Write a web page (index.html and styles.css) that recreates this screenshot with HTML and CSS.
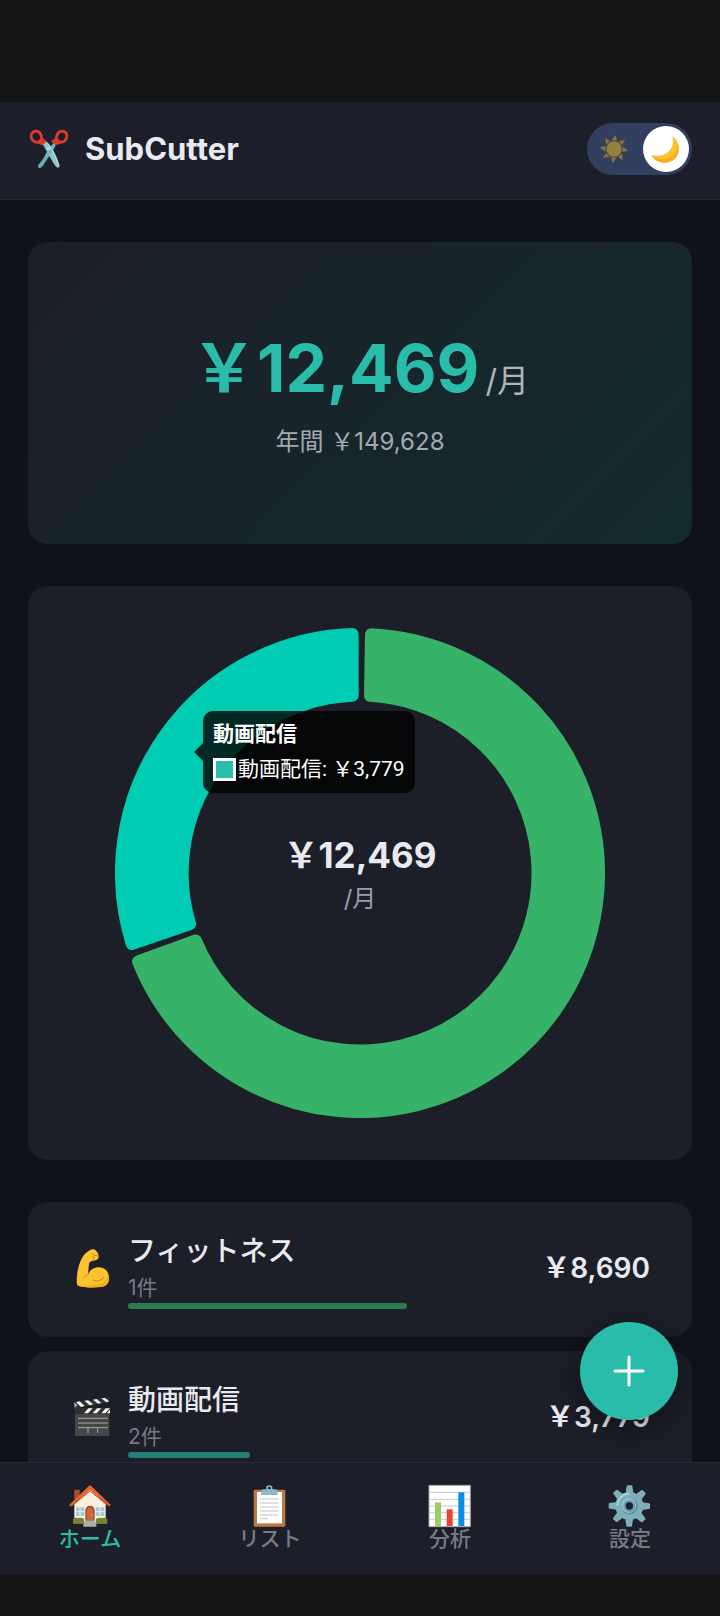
FILE: index.html
```html
<!DOCTYPE html>
<html lang="ja">
<head>
  <meta charset="UTF-8">
  <meta name="viewport" content="width=device-width, initial-scale=1.0">
  <title>SubCutter</title>
  <link rel="stylesheet" href="styles.css">
</head>
<body>
  <div class="app">
    <header class="header">
      <svg class="icon" viewBox="87 117 126 126" aria-hidden="true">
        <path d="M158 177 L118 228 Q115 238 123 237 Q128 236 132 230 L172 168 Z" fill="#6fa9b5"/>
        <path d="M129 162 L142 157 Q165 176 182 229 Q181 238 175 236 Q169 233 163 222 Z" fill="#8fc4ce"/>
        <path d="M170 166 L176 159 L165 160 L146 184 L132 212 L156 192 Z" fill="#79b3be"/>
        <path d="M145 162 Q166 187 179 232" fill="none" stroke="#b4dbe1" stroke-width="3"/>
        <g fill="none" stroke="#d93a2c" stroke-width="9">
          <ellipse cx="112" cy="143" rx="15" ry="17" transform="rotate(-30 112 143)"/>
          <ellipse cx="188" cy="143" rx="15" ry="17" transform="rotate(30 188 143)"/>
        </g>
        <path d="M116 164 L131 147 L144 157 L130 169 Z M184 164 L169 147 L156 157 L170 169 Z" fill="#d93a2c"/>
        <circle cx="149" cy="179" r="5" fill="#c5dde2"/>
      </svg>
      <h1 class="title">SubCutter</h1>
      <label class="theme-toggle">
        <input type="checkbox" class="theme-input" aria-label="ダークモード" checked>
        <svg class="sun" viewBox="121 106 84 84" aria-hidden="true">
          <circle cx="163" cy="148" r="23" fill="#f5c518"/>
          <g fill="#f4a01c">
            <path id="ray" d="M155 122 L168 106 L172 123 Z"/>
            <use href="#ray" transform="rotate(45 163 148)"/>
            <use href="#ray" transform="rotate(90 163 148)"/>
            <use href="#ray" transform="rotate(135 163 148)"/>
            <use href="#ray" transform="rotate(180 163 148)"/>
            <use href="#ray" transform="rotate(225 163 148)"/>
            <use href="#ray" transform="rotate(270 163 148)"/>
            <use href="#ray" transform="rotate(315 163 148)"/>
          </g>
        </svg>
        <span class="knob">
          <svg class="moon" viewBox="272 106 84 84" aria-hidden="true">
            <path d="M333 109 C349 120 357 142 350 161 C341 187 311 196 289 184 C280 179 274 173 271 166 C290 171 311 168 323 155 C335 142 337 126 333 109Z" fill="#fcc42c"/>
            <path d="M271 166 C285 182 308 182 326 172 C340 164 350 150 348 130 C357 150 350 172 335 182 C314 195 281 190 271 166Z" fill="#f9ab24"/>
          </svg>
        </span>
      </label>
    </header>

    <main class="main">
      <section class="card summary">
        <p class="total">￥12,469<span class="unit">/月</span></p>
        <p class="yearly">年間 ￥149,628</p>
      </section>

      <section class="card chart-card">
        <div class="chart">
          <svg class="donut" viewBox="-245 -245 490 490" role="img" aria-label="カテゴリ別の内訳">
            <path class="slice fitness" d="M11 -238.7 A239 239 0 1 1 -222 88.5 L-164.2 67.4 A177.5 177.5 0 1 0 10 -177.2 Z"/>
            <path class="slice video" d="M-228.2 71.1 A239 239 0 0 1 -7.4 -238.9 L-7.4 -177.3 A177.5 177.5 0 0 0 -169.9 51 Z"/>
          </svg>
          <div class="chart-center">
            <p class="chart-total">￥12,469</p>
            <p class="chart-unit">/月</p>
          </div>
          <div class="tooltip">
            <p class="tooltip-title">動画配信</p>
            <p class="tooltip-row"><span class="swatch"></span>動画配信: ￥3,779</p>
          </div>
        </div>
      </section>

      <ul class="list">
        <li class="card item">
          <svg class="icon" viewBox="210 174 126 126" aria-hidden="true">
            <path d="M278 175 C286 177 292 186 293 196 C294 204 286 209 277 209 C271 210 265 212 264 218 L261 250 C268 232 288 225 303 230 C319 234 325 250 324 265 C323 279 315 286 300 288 C275 291 248 289 231 284 C226 281 227 268 228 255 C230 228 240 200 254 187 C262 180 270 174 278 175Z" fill="#fdc22f"/>
            <path d="M320 246 C330 275 317 288 296 288 C272 291 248 289 231 284 C258 286 282 283 300 279 C314 274 320 264 320 246Z" fill="#f9a920"/>
            <path d="M261 250 Q253 253 247 261 M277 267 Q291 277 308 260 M273 187 Q280 197 291 195 M277 197 L279 207" fill="none" stroke="#c98517" stroke-width="3" stroke-linecap="round"/>
          </svg>
          <div class="info">
            <p class="name">フィットネス</p>
            <p class="count">1件</p>
            <div class="bar fitness" style="width: 69.7%"></div>
          </div>
          <p class="price">￥8,690</p>
        </li>
        <li class="card item">
          <svg class="icon" viewBox="213 622 126 126" aria-hidden="true">
            <path d="M225 669 H328 V736 H225 Z" fill="#454746"/>
            <path d="M222 635 L327 620 L328 634 L224 654 Z" fill="#303232"/>
            <path d="M222 652 H330 V669 H225 Z" fill="#303232"/>
            <g fill="#f3f3f3">
              <path d="M228 634 L239 632 L254 646 L243 649 Z M253 630 L264 629 L280 641 L269 644 Z M279 627 L290 625 L304 637 L294 639 Z M304 623 L315 622 L328 632 L319 635 Z"/>
              <path d="M265 653 H278 L264 668 H252 Z M291 653 H304 L290 668 H278 Z M317 653 H330 L316 668 H304 Z M326 661 L330 657 V668 H321 Z"/>
            </g>
            <path d="M234 683 H323 M234 697 H323 M234 711 H323 M264 711 V727 M293 711 V727" fill="none" stroke="#a9aaa8" stroke-width="3"/>
            <path d="M222 635 L233 643 L224 652 Z" fill="#a6a8a8"/>
          </svg>
          <div class="info">
            <p class="name">動画配信</p>
            <p class="count">2件</p>
            <div class="bar video" style="width: 30.3%"></div>
          </div>
          <p class="price">￥3,779</p>
        </li>
      </ul>
    </main>

    <button type="button" class="fab" aria-label="追加">
      <svg class="plus" viewBox="0 0 32 32" aria-hidden="true">
        <path d="M16 2 V30 M2 16 H30"/>
      </svg>
    </button>

    <nav class="nav">
      <a class="nav-item active" href="#home">
        <svg class="icon" viewBox="205 107 126 126" aria-hidden="true">
          <path d="M221 121 H237 V150 H221 Z" fill="#a9502b"/>
          <path d="M268 118 L315 164 V222 H221 V164 Z" fill="#fbf0e0"/>
          <path d="M206 166 Q204 171 212 170 L268 122 L325 170 Q332 170 330 166 L271 109 Q268 107 265 109 Z" fill="#e2642f"/>
          <path d="M212 171 L268 125 L325 171" fill="none" stroke="#b84a22" stroke-width="3"/>
          <path d="M226 174 H251 V200 H226 Z M285 174 H311 V200 H285 Z" fill="#9ecbd6"/>
          <path d="M238 173 V201 M298 173 V201 M225 187 H252 M284 187 H312" fill="none" stroke="#f7efe2" stroke-width="3"/>
          <path d="M254 214 V183 Q255 169 268 169 Q281 169 282 183 V214 Z" fill="#a04a2b"/>
          <path d="M258 214 V185 Q259 174 268 174 Q277 174 278 185 V214 Z" fill="#c8683b"/>
          <circle cx="274" cy="196" r="2" fill="#f8d66b"/>
          <path d="M217 209 Q222 204 232 206 Q242 204 250 208 V223 H217 Z M286 208 Q295 204 304 206 Q315 204 320 209 V223 H286 Z" fill="#778432"/>
          <path d="M251 214 H285 V222 H287 V232 H248 V222 H251 Z" fill="#b1aca8"/>
        </svg>
        <span class="nav-label">ホーム</span>
      </a>
      <a class="nav-item" href="#list">
        <svg class="icon" viewBox="747 105 126 126" aria-hidden="true">
          <rect x="761" y="119" width="95" height="111" rx="4" fill="#bd7740"/>
          <path d="M771 126 H846 V220 H771 Z" fill="#fff"/>
          <path d="M781 147 H835 M781 159 H835 M781 171 H835 M781 183 H835 M781 195 H835 M781 206 H804" fill="none" stroke="#bfc2cb" stroke-width="3"/>
          <path d="M783 135 V125 Q783 118 792 118 H824 Q833 118 833 125 V135 Z" fill="#8ab9ca"/>
          <circle cx="808" cy="115" r="7" fill="none" stroke="#8ab9ca" stroke-width="5"/>
        </svg>
        <span class="nav-label">リスト</span>
      </a>
      <a class="nav-item" href="#analysis">
        <svg class="icon" viewBox="207 105 126 126" aria-hidden="true">
          <path d="M207 106 H331 V230 H207 Z" fill="#fff" stroke="#a4a7ad" stroke-width="3"/>
          <path d="M209 127 H330 M209 148 H330 M209 168 H330 M209 188 H330 M209 208 H330" fill="none" stroke="#c6ccd0" stroke-width="3"/>
          <path d="M225 157 H243 V228 H225 Z" fill="#9dcc64"/>
          <path d="M260 178 H278 V228 H260 Z" fill="#ef4136"/>
          <path d="M295 127 H313 V228 H295 Z" fill="#078ee8"/>
        </svg>
        <span class="nav-label">分析</span>
      </a>
      <a class="nav-item" href="#settings">
        <svg class="icon" viewBox="747 106 126 126" aria-hidden="true">
          <g fill="#7eadbc">
            <path id="tooth" d="M796 136 L800 109 Q801 107 803 107 H814 Q816 107 817 109 L821 136 Z"/>
            <use href="#tooth" transform="rotate(45 808 169)"/>
            <use href="#tooth" transform="rotate(90 808 169)"/>
            <use href="#tooth" transform="rotate(135 808 169)"/>
            <use href="#tooth" transform="rotate(180 808 169)"/>
            <use href="#tooth" transform="rotate(225 808 169)"/>
            <use href="#tooth" transform="rotate(270 808 169)"/>
            <use href="#tooth" transform="rotate(315 808 169)"/>
            <circle cx="808" cy="169" r="42"/>
          </g>
          <path d="M772 166 A37 37 0 0 1 804 132" fill="none" stroke="#a9d4df" stroke-width="5" stroke-linecap="round"/>
          <circle cx="808" cy="169" r="25" fill="#568d9d"/>
          <circle cx="806" cy="167" r="23" fill="#93c0cd"/>
          <circle cx="808" cy="169" r="18" fill="#6a9dac"/>
          <circle cx="808" cy="169" r="11" fill="#1c1e29"/>
        </svg>
        <span class="nav-label">設定</span>
      </a>
    </nav>
  </div>
</body>
</html>
```

FILE: styles.css
```css
* {
  box-sizing: border-box;
  margin: 0;
  padding: 0;
}
body {
  font-family: Inter, "Noto Sans CJK JP", sans-serif;
  background-color: #141414;
  color: #e8eaf0;
}
.app {
  position: relative;
  display: flex;
  flex-direction: column;
  height: 100vh;
  padding: 102px 0 42px;
}
.icon {
  width: 42px;
  height: 42px;
  flex-shrink: 0;
  overflow: visible;
}

/* Header */
.header {
  display: flex;
  align-items: center;
  gap: 15px;
  padding: 21px 28px 24px;
  background-color: #1c1e29;
  border-bottom: 1px solid #272a35;
}
.title {
  flex: 1;
  font-size: 31px;
  line-height: 52px;
  font-weight: 700;
}
.theme-toggle {
  position: relative;
  display: flex;
  align-items: center;
  justify-content: space-between;
  width: 105px;
  height: 52px;
  padding: 0 3px 0 13px;
  border-radius: 26px;
  background-color: #323f5e;
  cursor: pointer;
}
.theme-input {
  position: absolute;
  inset: 0;
  opacity: 0;
}
.sun {
  width: 28px;
  height: 28px;
  opacity: 0.5;
}
.knob {
  display: flex;
  align-items: center;
  justify-content: center;
  width: 46px;
  height: 46px;
  border-radius: 50%;
  background-color: #fff;
}
.moon {
  width: 28px;
  height: 28px;
  overflow: visible;
}

/* Content */
.main {
  flex: 1;
  min-height: 0;
  display: flex;
  flex-direction: column;
  gap: 42px;
  padding: 42px 28px;
  overflow-y: auto;
  scrollbar-width: none;
  background-color: #0f1219;
}
.card {
  flex-shrink: 0;
  border-radius: 20px;
  background-color: #1c1e28;
}
.summary {
  padding: 70px 28px;
  text-align: center;
  background: linear-gradient(135deg, #1c1e28, #122c2c);
}
.total {
  font-size: 66px;
  line-height: 112px;
  font-weight: 700;
  color: #29bcaa;
}
.unit {
  margin-left: 6px;
  font-size: 32px;
  line-height: 32px;
  font-weight: 400;
  color: #b0b4bb;
}
.yearly {
  font-size: 24px;
  line-height: 36px;
  padding-bottom: 14px;
  color: #a4a9b0;
}

/* Chart */
.chart-card {
  padding: 42px;
}
.chart {
  position: relative;
  max-width: 490px;
  margin: 0 auto;
}
.donut {
  display: block;
  width: 100%;
}
.slice {
  stroke-width: 12;
  stroke-linejoin: round;
}
.slice.fitness {
  fill: #36b368;
  stroke: #36b368;
}
.slice.video {
  fill: #00ccb3;
  stroke: #00ccb3;
}
.chart-center {
  position: absolute;
  inset: 0;
  display: flex;
  flex-direction: column;
  align-items: center;
  justify-content: center;
}
.chart-total {
  font-size: 35px;
  line-height: 52px;
  font-weight: 700;
}
.chart-unit {
  font-size: 24px;
  line-height: 36px;
  color: #9a9daa;
}
.tooltip {
  position: absolute;
  top: 83px;
  left: 88px;
  padding: 6px 10px;
  border-radius: 10px;
  background-color: rgba(0, 0, 0, 0.8);
  color: #fff;
  font-family: Roboto, "Noto Sans CJK JP", sans-serif;
  font-size: 21px;
  line-height: 35px;
  white-space: nowrap;
}
.tooltip::before {
  content: "";
  position: absolute;
  top: 32px;
  left: -9px;
  border: solid transparent;
  border-width: 9px 9px 9px 0;
  border-right-color: rgba(0, 0, 0, 0.8);
}
.tooltip-title {
  font-weight: 700;
}
.tooltip-row {
  display: flex;
  align-items: center;
  gap: 2px;
}
.swatch {
  width: 23px;
  height: 23px;
  border: 3px solid #fff;
  background-color: #2bc0ae;
}

/* Category list */
.list {
  display: flex;
  flex-direction: column;
  gap: 14px;
  list-style: none;
}
.item {
  display: flex;
  align-items: center;
  gap: 14px;
  padding: 28px 42px;
}
.item .icon {
  width: 44px;
}
.info {
  flex: 1;
}
.name {
  font-size: 28px;
  line-height: 42px;
  font-weight: 500;
}
.count {
  font-size: 21px;
  line-height: 31px;
  color: #777a86;
}
.bar {
  height: 6px;
  border-radius: 3px;
}
.bar.fitness {
  background-color: #2c7c50;
}
.bar.video {
  background-color: #267f76;
}
.price {
  padding-bottom: 4px;
  font-size: 28px;
  line-height: 42px;
  font-weight: 600;
}

.fab {
  position: absolute;
  right: 42px;
  bottom: 196px;
  display: flex;
  align-items: center;
  justify-content: center;
  width: 98px;
  height: 98px;
  border: none;
  border-radius: 50%;
  background-color: #29bcaa;
  box-shadow: 0 8px 28px rgba(0, 0, 0, 0.4);
  cursor: pointer;
}
.plus {
  width: 32px;
  height: 32px;
  fill: none;
  stroke: #fff;
  stroke-width: 3;
  stroke-linecap: round;
}

/* Bottom navigation */
.nav {
  position: relative;
  display: grid;
  grid-template-columns: repeat(4, 1fr);
  padding: 22px 0 23px;
  background-color: #1c1e29;
  border-top: 1px solid #272a35;
}
.nav-item {
  display: flex;
  flex-direction: column;
  align-items: center;
  color: #777a86;
  font-size: 21px;
  line-height: 24px;
  font-weight: 500;
  text-decoration: none;
}
.nav-item.active {
  color: #29bcaa;
}
```
